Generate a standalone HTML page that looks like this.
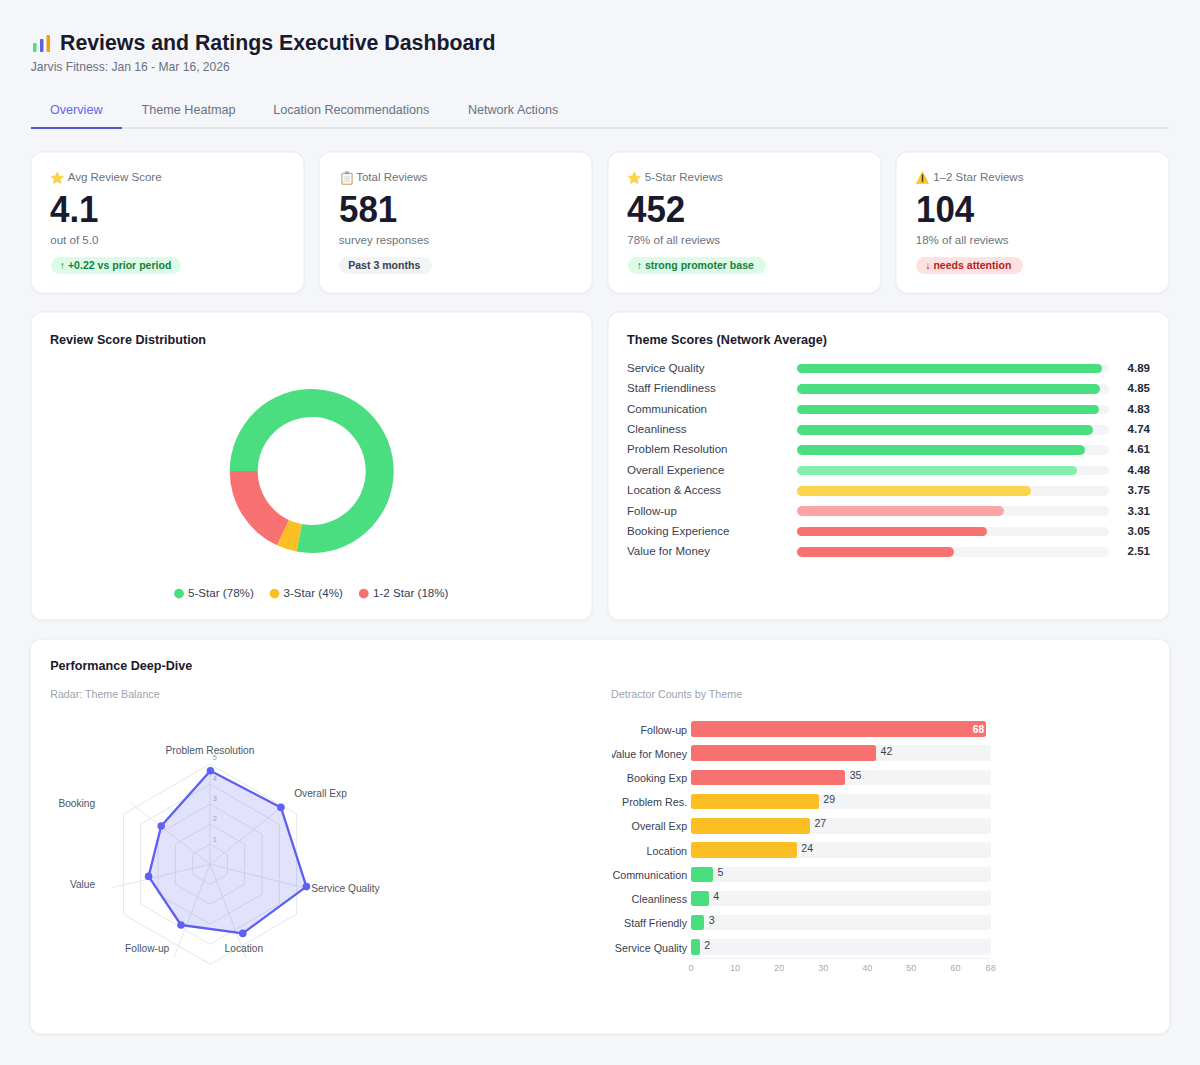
<!DOCTYPE html>
<html><head><meta charset="utf-8"><title>Reviews and Ratings Executive Dashboard</title>
<style>
html,body{margin:0;padding:0;}
body{width:1200px;height:1065px;background:#f4f6fa;position:relative;overflow:hidden;font-family:"Liberation Sans", sans-serif;}
.t{position:absolute;white-space:nowrap;line-height:1;}
.r{position:absolute;}
</style></head><body>
<svg class="r" style="left:31px;top:33px" width="22" height="22" viewBox="0 0 22 22"><rect x="2" y="10" width="3.5" height="9" rx="1" fill="#4ade80"/><rect x="9" y="6" width="3.5" height="13" rx="1" fill="#5b5fe0"/><rect x="15.5" y="2" width="3.5" height="17" rx="1" fill="#f59e0b"/></svg>
<div class="t" style="left:60.00px;top:32.67px;font-size:21.3px;color:#1a1a2e;font-weight:700;">Reviews and Ratings Executive Dashboard</div>
<div class="t" style="left:30.80px;top:61.46px;font-size:12.1px;color:#6b7280;font-weight:400;">Jarvis Fitness: Jan 16 - Mar 16, 2026</div>
<div class="r" style="left:30.72px;top:127.00px;width:1138.58px;height:2.00px;background:#e5e7eb;border-radius:0px;"></div>
<div class="r" style="left:30.72px;top:127.00px;width:91.28px;height:2.00px;background:#5356c9;border-radius:0px;"></div>
<div class="t" style="left:50.00px;top:104.03px;font-size:12.6px;color:#6366f1;font-weight:400;">Overview</div>
<div class="t" style="left:141.60px;top:104.03px;font-size:12.6px;color:#6b7280;font-weight:400;">Theme Heatmap</div>
<div class="t" style="left:273.30px;top:104.03px;font-size:12.6px;color:#6b7280;font-weight:400;">Location Recommendations</div>
<div class="t" style="left:467.90px;top:104.03px;font-size:12.6px;color:#6b7280;font-weight:400;">Network Actions</div>
<div class="r" style="left:30.72px;top:151.50px;width:273.10px;height:141.80px;background:#fff;border-radius:11.5px;box-shadow:0 0 0 0.5px #e8eaee, inset 0 0 0 0.5px #e8eaee, 0 1px 3px rgba(0,0,0,0.05);"></div>
<svg class="r" style="left:50.32px;top:170.90px" width="14.5" height="14.5" viewBox="0 0 24 24"><path d="M12 1.5l3.1 6.6 7.2.8-5.4 4.9 1.5 7.1L12 17.3l-6.4 3.6 1.5-7.1L1.7 8.9l7.2-.8z" fill="#fcd34d" stroke="#f5c518" stroke-width="0.8"/></svg>
<div class="t" style="left:67.72px;top:172.15px;font-size:11.52px;color:#6b7280;font-weight:400;">Avg Review Score</div>
<div class="t" style="left:50.32px;top:192.23px;font-size:36.0px;color:#1a1a2e;font-weight:700;transform:scaleX(0.97);transform-origin:0 0;">4.1</div>
<div class="t" style="left:50.32px;top:234.75px;font-size:11.52px;color:#6b7280;font-weight:400;">out of 5.0</div>
<div class="r" style="left:50.72px;top:256.80px;width:130.30px;height:17.00px;background:#dcfce7;border-radius:9px;"></div>
<div class="t" style="left:59.72px;top:260.01px;font-size:10.56px;color:#15803d;font-weight:700;">↑ +0.22 vs prior period</div>
<div class="r" style="left:319.20px;top:151.50px;width:273.10px;height:141.80px;background:#fff;border-radius:11.5px;box-shadow:0 0 0 0.5px #e8eaee, inset 0 0 0 0.5px #e8eaee, 0 1px 3px rgba(0,0,0,0.05);"></div>
<svg class="r" style="left:340.70px;top:171.20px" width="12" height="14" viewBox="0 0 12 14"><rect x="0.9" y="2.2" width="10.2" height="11" rx="1" fill="#fdf8f1" stroke="#c89c6c" stroke-width="1.1"/><rect x="3.8" y="0.6" width="4.4" height="2.6" rx="0.8" fill="#8ea8c2"/><rect x="3.3" y="5.5" width="5.4" height="0.9" fill="#c6d2dc"/><rect x="3.3" y="7.6" width="5.4" height="0.9" fill="#c6d2dc"/><rect x="3.3" y="9.7" width="5.4" height="0.9" fill="#c6d2dc"/></svg>
<div class="t" style="left:356.20px;top:172.15px;font-size:11.52px;color:#6b7280;font-weight:400;">Total Reviews</div>
<div class="t" style="left:338.80px;top:192.23px;font-size:36.0px;color:#1a1a2e;font-weight:700;transform:scaleX(0.97);transform-origin:0 0;">581</div>
<div class="t" style="left:338.80px;top:234.75px;font-size:11.52px;color:#6b7280;font-weight:400;">survey responses</div>
<div class="r" style="left:339.20px;top:256.80px;width:92.80px;height:17.00px;background:#f3f4f6;border-radius:9px;"></div>
<div class="t" style="left:348.20px;top:260.01px;font-size:10.56px;color:#374151;font-weight:700;">Past 3 months</div>
<div class="r" style="left:607.70px;top:151.50px;width:273.10px;height:141.80px;background:#fff;border-radius:11.5px;box-shadow:0 0 0 0.5px #e8eaee, inset 0 0 0 0.5px #e8eaee, 0 1px 3px rgba(0,0,0,0.05);"></div>
<svg class="r" style="left:627.30px;top:170.90px" width="14.5" height="14.5" viewBox="0 0 24 24"><path d="M12 1.5l3.1 6.6 7.2.8-5.4 4.9 1.5 7.1L12 17.3l-6.4 3.6 1.5-7.1L1.7 8.9l7.2-.8z" fill="#fcd34d" stroke="#f5c518" stroke-width="0.8"/></svg>
<div class="t" style="left:644.70px;top:172.15px;font-size:11.52px;color:#6b7280;font-weight:400;">5-Star Reviews</div>
<div class="t" style="left:627.30px;top:192.23px;font-size:36.0px;color:#1a1a2e;font-weight:700;transform:scaleX(0.97);transform-origin:0 0;">452</div>
<div class="t" style="left:627.30px;top:234.75px;font-size:11.52px;color:#6b7280;font-weight:400;">78% of all reviews</div>
<div class="r" style="left:627.70px;top:256.80px;width:138.50px;height:17.00px;background:#dcfce7;border-radius:9px;"></div>
<div class="t" style="left:636.70px;top:260.01px;font-size:10.56px;color:#15803d;font-weight:700;">↑ strong promoter base</div>
<div class="r" style="left:896.20px;top:151.50px;width:273.10px;height:141.80px;background:#fff;border-radius:11.5px;box-shadow:0 0 0 0.5px #e8eaee, inset 0 0 0 0.5px #e8eaee, 0 1px 3px rgba(0,0,0,0.05);"></div>
<svg class="r" style="left:916.20px;top:171.20px" width="13" height="13" viewBox="0 0 13 13"><path d="M6.5 0.6 L12.6 12.5 L0.4 12.5 Z" fill="#f7c531" stroke="#f2bd22" stroke-width="0.6" stroke-linejoin="round"/><rect x="5.8" y="3.4" width="1.4" height="7.6" fill="#4a3b10"/></svg>
<div class="t" style="left:933.20px;top:172.15px;font-size:11.52px;color:#6b7280;font-weight:400;">1–2 Star Reviews</div>
<div class="t" style="left:915.80px;top:192.23px;font-size:36.0px;color:#1a1a2e;font-weight:700;transform:scaleX(0.97);transform-origin:0 0;">104</div>
<div class="t" style="left:915.80px;top:234.75px;font-size:11.52px;color:#6b7280;font-weight:400;">18% of all reviews</div>
<div class="r" style="left:916.20px;top:256.80px;width:107.30px;height:17.00px;background:#fee2e2;border-radius:9px;"></div>
<div class="t" style="left:925.20px;top:260.01px;font-size:10.56px;color:#b91c1c;font-weight:700;">↓ needs attention</div>
<div class="r" style="left:30.72px;top:312.00px;width:561.58px;height:308.00px;background:#fff;border-radius:11.5px;box-shadow:0 0 0 0.5px #e8eaee, inset 0 0 0 0.5px #e8eaee, 0 1px 3px rgba(0,0,0,0.05);"></div>
<div class="r" style="left:607.70px;top:312.00px;width:561.60px;height:308.00px;background:#fff;border-radius:11.5px;box-shadow:0 0 0 0.5px #e8eaee, inset 0 0 0 0.5px #e8eaee, 0 1px 3px rgba(0,0,0,0.05);"></div>
<div class="t" style="left:50.00px;top:333.93px;font-size:12.6px;color:#1a1a2e;font-weight:700;">Review Score Distribution</div>
<div class="t" style="left:627.00px;top:333.93px;font-size:12.6px;color:#1a1a2e;font-weight:700;">Theme Scores (Network Average)</div>
<svg class="r" style="left:0;top:0" width="1200" height="1065" viewBox="0 0 1200 1065"><path d="M229.70,471.00 A82.0,82.0 0 1 1 296.59,551.60 L301.75,524.08 A54.0,54.0 0 1 0 257.70,471.00 Z" fill="#4ade80"/><path d="M296.59,551.60 A82.0,82.0 0 0 1 277.02,545.31 L288.86,519.93 A54.0,54.0 0 0 0 301.75,524.08 Z" fill="#fbbf24"/><path d="M277.02,545.31 A82.0,82.0 0 0 1 229.70,471.00 L257.70,471.00 A54.0,54.0 0 0 0 288.86,519.93 Z" fill="#f87171"/><circle cx="179.0" cy="593.6" r="4.9" fill="#4ade80"/><circle cx="274.5" cy="593.6" r="4.9" fill="#fbbf24"/><circle cx="363.75" cy="593.6" r="4.9" fill="#f87171"/></svg>
<div class="t" style="left:188.00px;top:586.86px;font-size:11.62px;color:#374151;font-weight:400;">5-Star (78%)</div>
<div class="t" style="left:283.50px;top:586.86px;font-size:11.62px;color:#374151;font-weight:400;">3-Star (4%)</div>
<div class="t" style="left:373.00px;top:586.86px;font-size:11.62px;color:#374151;font-weight:400;">1-2 Star (18%)</div>
<div class="r" style="left:796.50px;top:363.75px;width:312.80px;height:9.70px;background:#f3f4f6;border-radius:5px;"></div>
<div class="r" style="left:796.50px;top:363.75px;width:305.92px;height:9.70px;background:#4ade80;border-radius:5px;"></div>
<div class="t" style="left:627.00px;top:362.95px;font-size:11.52px;color:#374151;font-weight:400;">Service Quality</div>
<div class="t" style="right:50.00px;text-align:right;top:362.85px;font-size:11.52px;color:#1f2937;font-weight:700;">4.89</div>
<div class="r" style="left:796.50px;top:384.13px;width:312.80px;height:9.70px;background:#f3f4f6;border-radius:5px;"></div>
<div class="r" style="left:796.50px;top:384.13px;width:303.42px;height:9.70px;background:#4ade80;border-radius:5px;"></div>
<div class="t" style="left:627.00px;top:383.33px;font-size:11.52px;color:#374151;font-weight:400;">Staff Friendliness</div>
<div class="t" style="right:50.00px;text-align:right;top:383.23px;font-size:11.52px;color:#1f2937;font-weight:700;">4.85</div>
<div class="r" style="left:796.50px;top:404.51px;width:312.80px;height:9.70px;background:#f3f4f6;border-radius:5px;"></div>
<div class="r" style="left:796.50px;top:404.51px;width:302.16px;height:9.70px;background:#4ade80;border-radius:5px;"></div>
<div class="t" style="left:627.00px;top:403.71px;font-size:11.52px;color:#374151;font-weight:400;">Communication</div>
<div class="t" style="right:50.00px;text-align:right;top:403.61px;font-size:11.52px;color:#1f2937;font-weight:700;">4.83</div>
<div class="r" style="left:796.50px;top:424.89px;width:312.80px;height:9.70px;background:#f3f4f6;border-radius:5px;"></div>
<div class="r" style="left:796.50px;top:424.89px;width:296.53px;height:9.70px;background:#4ade80;border-radius:5px;"></div>
<div class="t" style="left:627.00px;top:424.09px;font-size:11.52px;color:#374151;font-weight:400;">Cleanliness</div>
<div class="t" style="right:50.00px;text-align:right;top:423.99px;font-size:11.52px;color:#1f2937;font-weight:700;">4.74</div>
<div class="r" style="left:796.50px;top:445.27px;width:312.80px;height:9.70px;background:#f3f4f6;border-radius:5px;"></div>
<div class="r" style="left:796.50px;top:445.27px;width:288.40px;height:9.70px;background:#4ade80;border-radius:5px;"></div>
<div class="t" style="left:627.00px;top:444.47px;font-size:11.52px;color:#374151;font-weight:400;">Problem Resolution</div>
<div class="t" style="right:50.00px;text-align:right;top:444.37px;font-size:11.52px;color:#1f2937;font-weight:700;">4.61</div>
<div class="r" style="left:796.50px;top:465.65px;width:312.80px;height:9.70px;background:#f3f4f6;border-radius:5px;"></div>
<div class="r" style="left:796.50px;top:465.65px;width:280.27px;height:9.70px;background:#86efac;border-radius:5px;"></div>
<div class="t" style="left:627.00px;top:464.85px;font-size:11.52px;color:#374151;font-weight:400;">Overall Experience</div>
<div class="t" style="right:50.00px;text-align:right;top:464.75px;font-size:11.52px;color:#1f2937;font-weight:700;">4.48</div>
<div class="r" style="left:796.50px;top:486.03px;width:312.80px;height:9.70px;background:#f3f4f6;border-radius:5px;"></div>
<div class="r" style="left:796.50px;top:486.03px;width:234.60px;height:9.70px;background:#fcd34d;border-radius:5px;"></div>
<div class="t" style="left:627.00px;top:485.23px;font-size:11.52px;color:#374151;font-weight:400;">Location &amp; Access</div>
<div class="t" style="right:50.00px;text-align:right;top:485.13px;font-size:11.52px;color:#1f2937;font-weight:700;">3.75</div>
<div class="r" style="left:796.50px;top:506.41px;width:312.80px;height:9.70px;background:#f3f4f6;border-radius:5px;"></div>
<div class="r" style="left:796.50px;top:506.41px;width:207.07px;height:9.70px;background:#fca5a5;border-radius:5px;"></div>
<div class="t" style="left:627.00px;top:505.61px;font-size:11.52px;color:#374151;font-weight:400;">Follow-up</div>
<div class="t" style="right:50.00px;text-align:right;top:505.51px;font-size:11.52px;color:#1f2937;font-weight:700;">3.31</div>
<div class="r" style="left:796.50px;top:526.79px;width:312.80px;height:9.70px;background:#f3f4f6;border-radius:5px;"></div>
<div class="r" style="left:796.50px;top:526.79px;width:190.81px;height:9.70px;background:#f87171;border-radius:5px;"></div>
<div class="t" style="left:627.00px;top:525.99px;font-size:11.52px;color:#374151;font-weight:400;">Booking Experience</div>
<div class="t" style="right:50.00px;text-align:right;top:525.89px;font-size:11.52px;color:#1f2937;font-weight:700;">3.05</div>
<div class="r" style="left:796.50px;top:547.17px;width:312.80px;height:9.70px;background:#f3f4f6;border-radius:5px;"></div>
<div class="r" style="left:796.50px;top:547.17px;width:157.03px;height:9.70px;background:#f87171;border-radius:5px;"></div>
<div class="t" style="left:627.00px;top:546.37px;font-size:11.52px;color:#374151;font-weight:400;">Value for Money</div>
<div class="t" style="right:50.00px;text-align:right;top:546.27px;font-size:11.52px;color:#1f2937;font-weight:700;">2.51</div>
<div class="r" style="left:30.40px;top:638.50px;width:1139.40px;height:395.80px;background:#fff;border-radius:11.5px;box-shadow:0 0 0 0.5px #e8eaee, inset 0 0 0 0.5px #e8eaee, 0 1px 3px rgba(0,0,0,0.05);"></div>
<div class="t" style="left:50.20px;top:660.03px;font-size:12.6px;color:#1a1a2e;font-weight:700;">Performance Deep-Dive</div>
<div class="t" style="left:50.20px;top:688.78px;font-size:10.66px;color:#9ca3af;font-weight:400;">Radar: Theme Balance</div>
<div class="t" style="left:611.00px;top:689.14px;font-size:10.7px;color:#9ca3af;font-weight:400;">Detractor Counts by Theme</div>
<svg class="r" style="left:0;top:0" width="1200" height="1065" viewBox="0 0 1200 1065"><polygon points="210.00,844.20 227.32,854.20 227.32,874.20 210.00,884.20 192.68,874.20 192.68,854.20" fill="none" stroke="#e5e7eb" stroke-width="1"/><polygon points="210.00,824.20 244.64,844.20 244.64,884.20 210.00,904.20 175.36,884.20 175.36,844.20" fill="none" stroke="#e5e7eb" stroke-width="1"/><polygon points="210.00,804.20 261.96,834.20 261.96,894.20 210.00,924.20 158.04,894.20 158.04,834.20" fill="none" stroke="#e5e7eb" stroke-width="1"/><polygon points="210.00,784.20 279.28,824.20 279.28,904.20 210.00,944.20 140.72,904.20 140.72,824.20" fill="none" stroke="#e5e7eb" stroke-width="1"/><polygon points="210.00,764.20 296.60,814.20 296.60,914.20 210.00,964.20 123.40,914.20 123.40,814.20" fill="none" stroke="#e5e7eb" stroke-width="1"/><line x1="210.0" y1="864.2" x2="210.00" y2="764.20" stroke="#e5e7eb" stroke-width="1"/><line x1="210.0" y1="864.2" x2="288.26" y2="801.95" stroke="#e5e7eb" stroke-width="1"/><line x1="210.0" y1="864.2" x2="307.03" y2="888.39" stroke="#e5e7eb" stroke-width="1"/><line x1="210.0" y1="864.2" x2="245.84" y2="957.56" stroke="#e5e7eb" stroke-width="1"/><line x1="210.0" y1="864.2" x2="174.16" y2="957.56" stroke="#e5e7eb" stroke-width="1"/><line x1="210.0" y1="864.2" x2="112.76" y2="887.54" stroke="#e5e7eb" stroke-width="1"/><line x1="210.0" y1="864.2" x2="130.66" y2="803.32" stroke="#e5e7eb" stroke-width="1"/><polygon points="210.4,770.8 280.9,807.4 306.4,886.6 242.8,933.4 181.0,925.0 148.6,876.4 161.2,826.0" fill="rgba(99,102,241,0.19)" stroke="#5d5ff0" stroke-width="2.3" stroke-linejoin="round"/><circle cx="210.4" cy="770.8" r="3.8" fill="#5f61f0"/><circle cx="280.9" cy="807.4" r="3.8" fill="#5f61f0"/><circle cx="306.4" cy="886.6" r="3.8" fill="#5f61f0"/><circle cx="242.8" cy="933.4" r="3.8" fill="#5f61f0"/><circle cx="181.0" cy="925.0" r="3.8" fill="#5f61f0"/><circle cx="148.6" cy="876.4" r="3.8" fill="#5f61f0"/><circle cx="161.2" cy="826.0" r="3.8" fill="#5f61f0"/></svg>
<div class="t" style="left:-85.20px;width:600px;text-align:center;top:835.65px;font-size:7.5px;color:#9ca3af;font-weight:400;">1</div>
<div class="t" style="left:-85.20px;width:600px;text-align:center;top:815.25px;font-size:7.5px;color:#9ca3af;font-weight:400;">2</div>
<div class="t" style="left:-85.20px;width:600px;text-align:center;top:795.25px;font-size:7.5px;color:#9ca3af;font-weight:400;">3</div>
<div class="t" style="left:-85.20px;width:600px;text-align:center;top:774.95px;font-size:7.5px;color:#9ca3af;font-weight:400;">4</div>
<div class="t" style="left:-85.20px;width:600px;text-align:center;top:754.45px;font-size:7.5px;color:#9ca3af;font-weight:400;">5</div>
<div class="t" style="left:-90.00px;width:600px;text-align:center;top:746.47px;font-size:10.2px;color:#4b5563;font-weight:400;">Problem Resolution</div>
<div class="t" style="left:294.20px;top:788.67px;font-size:10.2px;color:#4b5563;font-weight:400;">Overall Exp</div>
<div class="t" style="left:311.20px;top:884.07px;font-size:10.2px;color:#4b5563;font-weight:400;">Service Quality</div>
<div class="t" style="left:-56.20px;width:600px;text-align:center;top:944.07px;font-size:10.2px;color:#4b5563;font-weight:400;">Location</div>
<div class="t" style="left:-152.80px;width:600px;text-align:center;top:944.07px;font-size:10.2px;color:#4b5563;font-weight:400;">Follow-up</div>
<div class="t" style="right:1104.80px;text-align:right;top:879.57px;font-size:10.2px;color:#4b5563;font-weight:400;">Value</div>
<div class="t" style="right:1104.80px;text-align:right;top:798.57px;font-size:10.2px;color:#4b5563;font-weight:400;">Booking</div>
<div class="r" style="left:691.00px;top:721.20px;width:295.00px;height:15.50px;background:#f87171;border-radius:2.5px;"></div>
<div class="r" style="left:611.5px;top:717.20px;width:78px;height:24px;overflow:hidden">
<div class="t" style="right:2.40px;text-align:right;top:7.35px;font-size:10.75px;color:#374151">Follow-up</div></div>
<div class="t" style="right:215.80px;text-align:right;top:724.62px;font-size:10.2px;color:#ffffff;font-weight:700;">68</div>
<div class="r" style="left:691.00px;top:745.42px;width:299.70px;height:15.50px;background:#f3f4f6;border-radius:2.5px;"></div>
<div class="r" style="left:691.00px;top:745.42px;width:185.11px;height:15.50px;background:#f87171;border-radius:2.5px;"></div>
<div class="r" style="left:611.5px;top:741.42px;width:78px;height:24px;overflow:hidden">
<div class="t" style="right:2.40px;text-align:right;top:7.35px;font-size:10.75px;color:#374151">Value for Money</div></div>
<div class="t" style="left:880.61px;top:745.78px;font-size:10.56px;color:#374151;font-weight:400;">42</div>
<div class="r" style="left:691.00px;top:769.64px;width:299.70px;height:15.50px;background:#f3f4f6;border-radius:2.5px;"></div>
<div class="r" style="left:691.00px;top:769.64px;width:154.26px;height:15.50px;background:#f87171;border-radius:2.5px;"></div>
<div class="r" style="left:611.5px;top:765.64px;width:78px;height:24px;overflow:hidden">
<div class="t" style="right:2.40px;text-align:right;top:7.35px;font-size:10.75px;color:#374151">Booking Exp</div></div>
<div class="t" style="left:849.76px;top:770.00px;font-size:10.56px;color:#374151;font-weight:400;">35</div>
<div class="r" style="left:691.00px;top:793.86px;width:299.70px;height:15.50px;background:#f3f4f6;border-radius:2.5px;"></div>
<div class="r" style="left:691.00px;top:793.86px;width:127.81px;height:15.50px;background:#fbbf24;border-radius:2.5px;"></div>
<div class="r" style="left:611.5px;top:789.86px;width:78px;height:24px;overflow:hidden">
<div class="t" style="right:2.40px;text-align:right;top:7.35px;font-size:10.75px;color:#374151">Problem Res.</div></div>
<div class="t" style="left:823.31px;top:794.22px;font-size:10.56px;color:#374151;font-weight:400;">29</div>
<div class="r" style="left:691.00px;top:818.08px;width:299.70px;height:15.50px;background:#f3f4f6;border-radius:2.5px;"></div>
<div class="r" style="left:691.00px;top:818.08px;width:119.00px;height:15.50px;background:#fbbf24;border-radius:2.5px;"></div>
<div class="r" style="left:611.5px;top:814.08px;width:78px;height:24px;overflow:hidden">
<div class="t" style="right:2.40px;text-align:right;top:7.35px;font-size:10.75px;color:#374151">Overall Exp</div></div>
<div class="t" style="left:814.50px;top:818.44px;font-size:10.56px;color:#374151;font-weight:400;">27</div>
<div class="r" style="left:691.00px;top:842.30px;width:299.70px;height:15.50px;background:#f3f4f6;border-radius:2.5px;"></div>
<div class="r" style="left:691.00px;top:842.30px;width:105.78px;height:15.50px;background:#fbbf24;border-radius:2.5px;"></div>
<div class="r" style="left:611.5px;top:838.30px;width:78px;height:24px;overflow:hidden">
<div class="t" style="right:2.40px;text-align:right;top:7.35px;font-size:10.75px;color:#374151">Location</div></div>
<div class="t" style="left:801.28px;top:842.66px;font-size:10.56px;color:#374151;font-weight:400;">24</div>
<div class="r" style="left:691.00px;top:866.52px;width:299.70px;height:15.50px;background:#f3f4f6;border-radius:2.5px;"></div>
<div class="r" style="left:691.00px;top:866.52px;width:22.04px;height:15.50px;background:#4ade80;border-radius:2.5px;"></div>
<div class="r" style="left:611.5px;top:862.52px;width:78px;height:24px;overflow:hidden">
<div class="t" style="right:2.40px;text-align:right;top:7.35px;font-size:10.75px;color:#374151">Communication</div></div>
<div class="t" style="left:717.54px;top:866.88px;font-size:10.56px;color:#374151;font-weight:400;">5</div>
<div class="r" style="left:691.00px;top:890.74px;width:299.70px;height:15.50px;background:#f3f4f6;border-radius:2.5px;"></div>
<div class="r" style="left:691.00px;top:890.74px;width:17.63px;height:15.50px;background:#4ade80;border-radius:2.5px;"></div>
<div class="r" style="left:611.5px;top:886.74px;width:78px;height:24px;overflow:hidden">
<div class="t" style="right:2.40px;text-align:right;top:7.35px;font-size:10.75px;color:#374151">Cleanliness</div></div>
<div class="t" style="left:713.13px;top:891.10px;font-size:10.56px;color:#374151;font-weight:400;">4</div>
<div class="r" style="left:691.00px;top:914.96px;width:299.70px;height:15.50px;background:#f3f4f6;border-radius:2.5px;"></div>
<div class="r" style="left:691.00px;top:914.96px;width:13.22px;height:15.50px;background:#4ade80;border-radius:2.5px;"></div>
<div class="r" style="left:611.5px;top:910.96px;width:78px;height:24px;overflow:hidden">
<div class="t" style="right:2.40px;text-align:right;top:7.35px;font-size:10.75px;color:#374151">Staff Friendly</div></div>
<div class="t" style="left:708.72px;top:915.32px;font-size:10.56px;color:#374151;font-weight:400;">3</div>
<div class="r" style="left:691.00px;top:939.18px;width:299.70px;height:15.50px;background:#f3f4f6;border-radius:2.5px;"></div>
<div class="r" style="left:691.00px;top:939.18px;width:8.81px;height:15.50px;background:#4ade80;border-radius:2.5px;"></div>
<div class="r" style="left:611.5px;top:935.18px;width:78px;height:24px;overflow:hidden">
<div class="t" style="right:2.40px;text-align:right;top:7.35px;font-size:10.75px;color:#374151">Service Quality</div></div>
<div class="t" style="left:704.31px;top:939.54px;font-size:10.56px;color:#374151;font-weight:400;">2</div>
<div class="r" style="left:691.00px;top:958.20px;width:299.70px;height:1.00px;background:#eef0f3;border-radius:0px;"></div>
<div class="t" style="left:391.00px;width:600px;text-align:center;top:963.98px;font-size:9.12px;color:#a7abb3;font-weight:400;">0</div>
<div class="t" style="left:435.07px;width:600px;text-align:center;top:963.98px;font-size:9.12px;color:#a7abb3;font-weight:400;">10</div>
<div class="t" style="left:479.15px;width:600px;text-align:center;top:963.98px;font-size:9.12px;color:#a7abb3;font-weight:400;">20</div>
<div class="t" style="left:523.22px;width:600px;text-align:center;top:963.98px;font-size:9.12px;color:#a7abb3;font-weight:400;">30</div>
<div class="t" style="left:567.29px;width:600px;text-align:center;top:963.98px;font-size:9.12px;color:#a7abb3;font-weight:400;">40</div>
<div class="t" style="left:611.37px;width:600px;text-align:center;top:963.98px;font-size:9.12px;color:#a7abb3;font-weight:400;">50</div>
<div class="t" style="left:655.44px;width:600px;text-align:center;top:963.98px;font-size:9.12px;color:#a7abb3;font-weight:400;">60</div>
<div class="t" style="left:690.70px;width:600px;text-align:center;top:963.98px;font-size:9.12px;color:#a7abb3;font-weight:400;">68</div>
</body></html>
